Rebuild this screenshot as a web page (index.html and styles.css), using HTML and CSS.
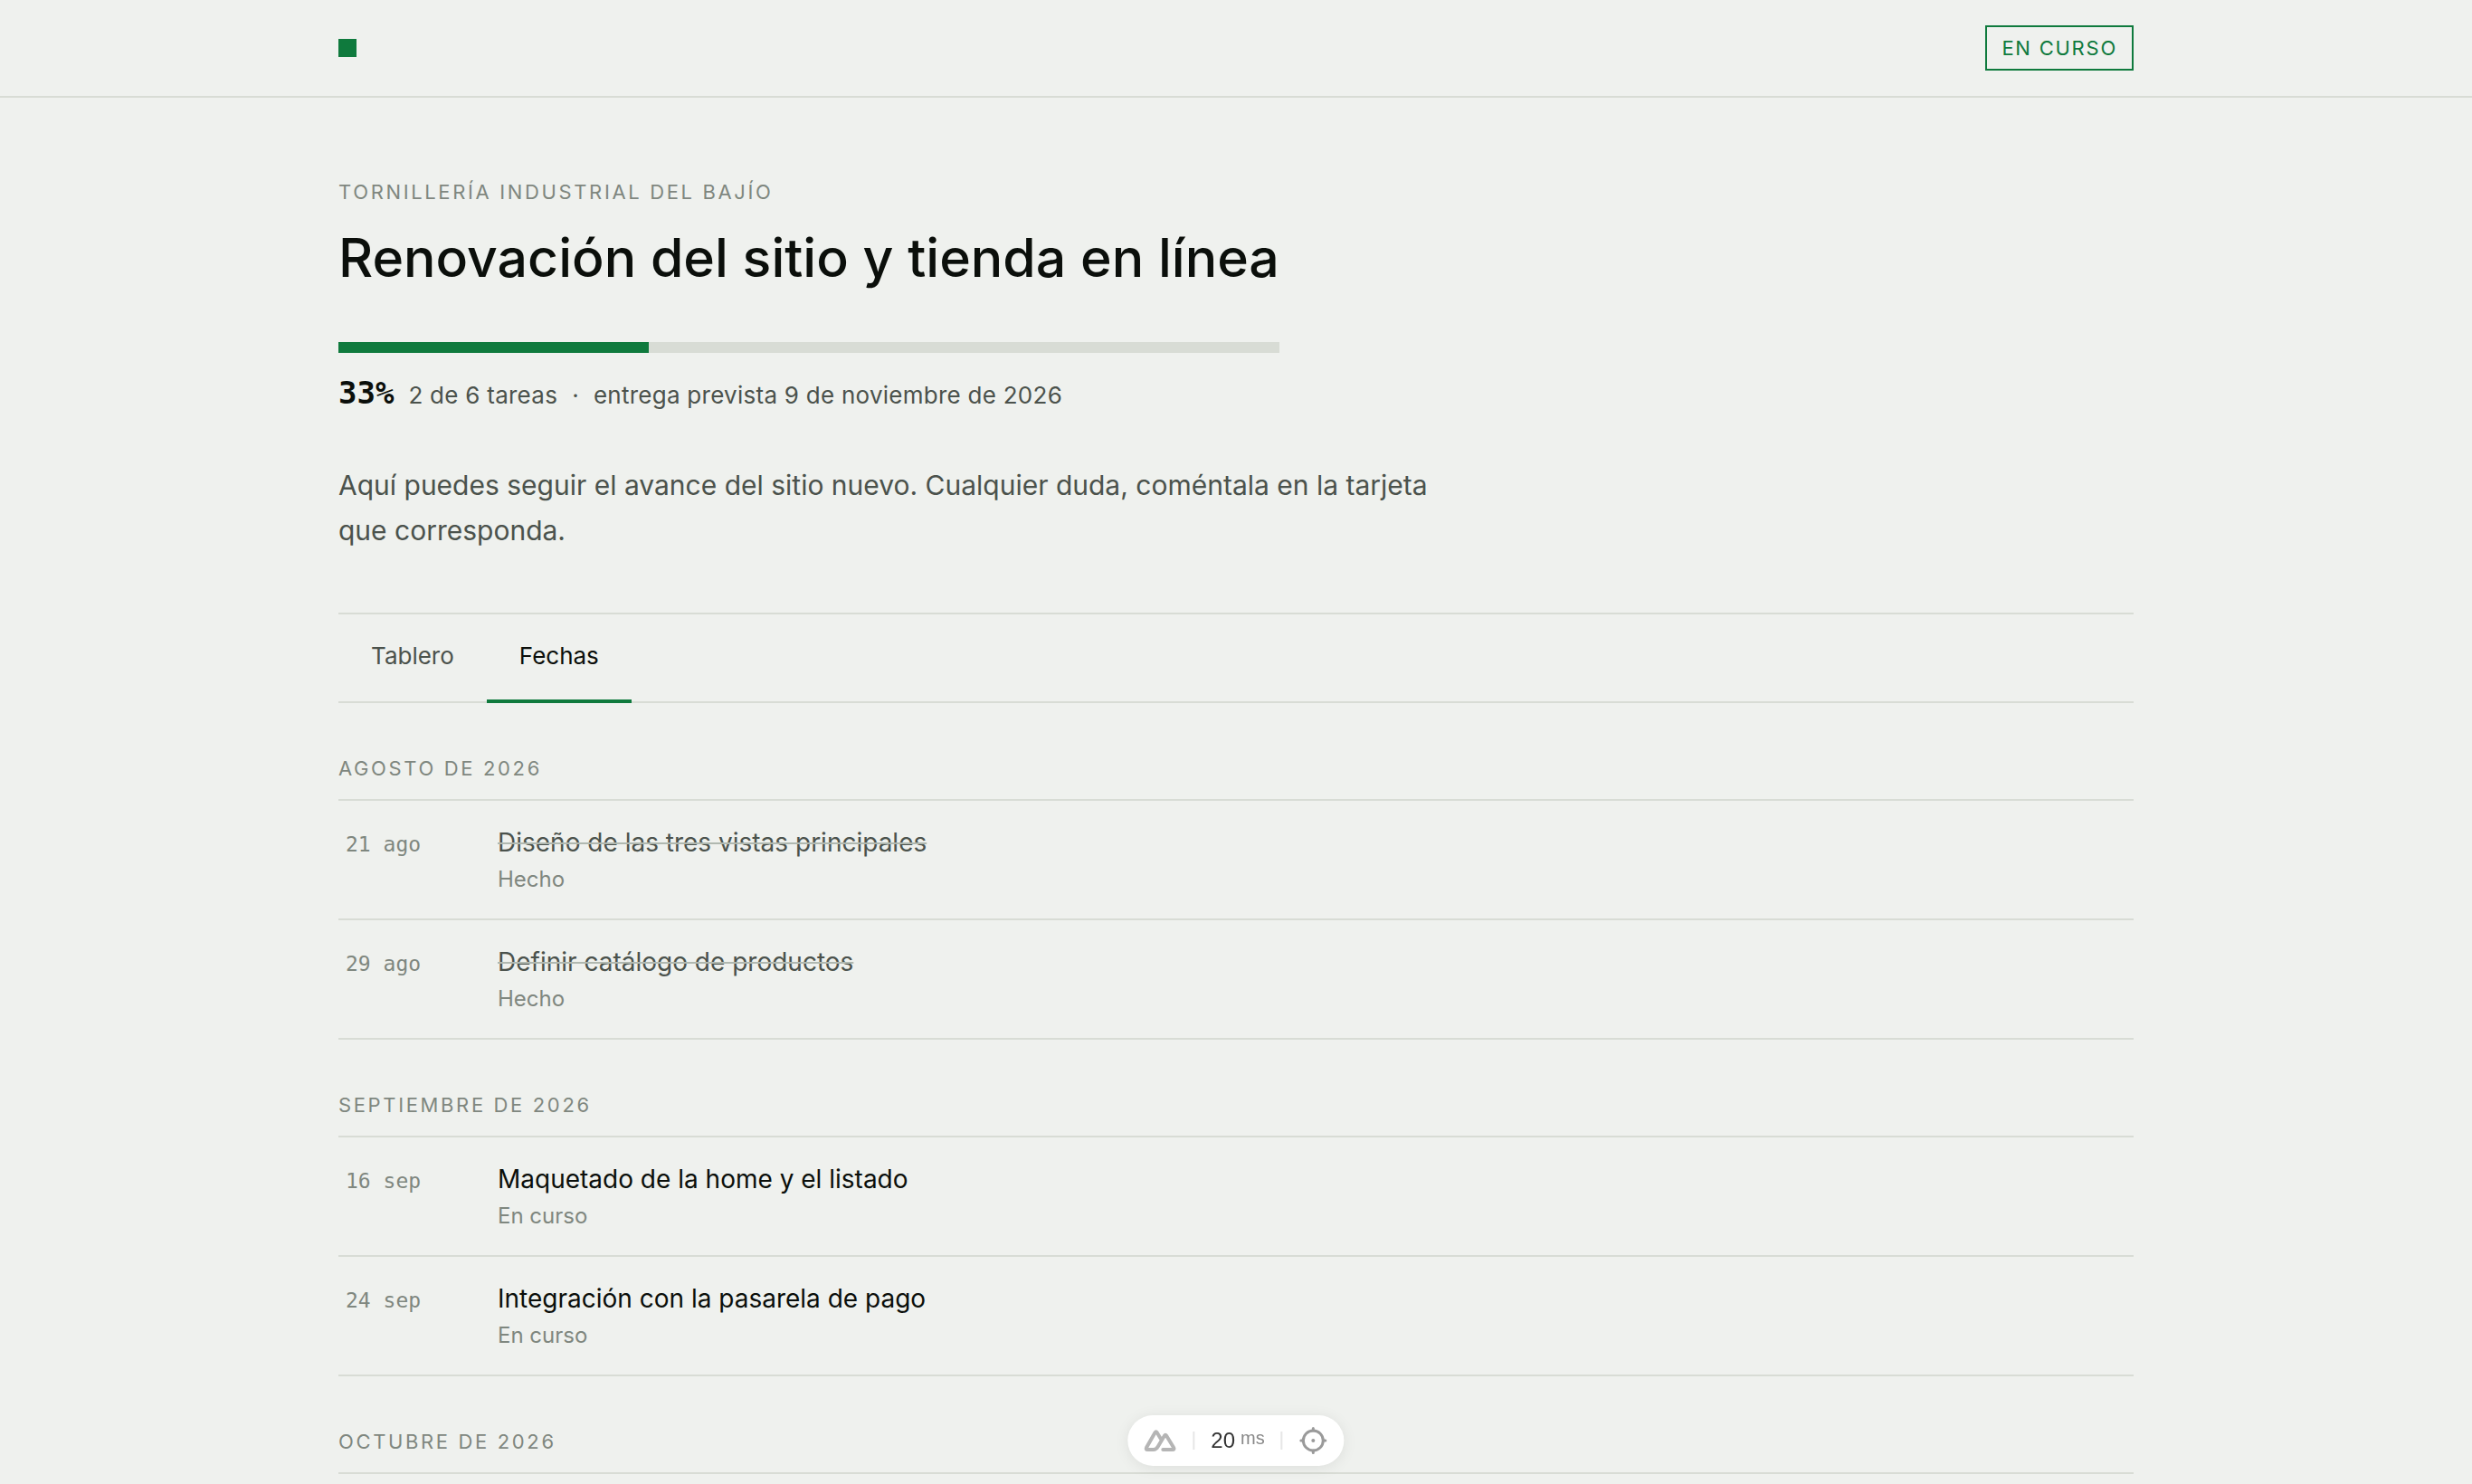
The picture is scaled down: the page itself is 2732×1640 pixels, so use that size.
FILE: index.html
```html
<!DOCTYPE html>
<html lang="es">
<head>
<meta charset="utf-8">
<meta name="viewport" content="width=device-width, initial-scale=1">
<title>Renovación del sitio y tienda en línea</title>
<link rel="stylesheet" href="styles.css">
</head>
<body>
<header class="topbar">
  <div class="container topbar-inner">
    <span class="mark"></span>
    <span class="badge">EN CURSO</span>
  </div>
</header>
<main class="container main">
  <p class="label">TORNILLERÍA INDUSTRIAL DEL BAJÍO</p>
  <h1 class="title">Renovación del sitio y tienda en línea</h1>
  <div class="progress"><div class="progress-fill" style="width: 33%"></div></div>
  <p class="meta"><strong class="percent">33%</strong><span>2 de 6 tareas</span><span class="dot">·</span><span>entrega prevista 9 de noviembre de 2026</span></p>
  <p class="intro">Aquí puedes seguir el avance del sitio nuevo. Cualquier duda, coméntala en la tarjeta que corresponda.</p>
  <nav class="tabs">
    <button class="tab" type="button">Tablero</button>
    <button class="tab tab-active" type="button">Fechas</button>
  </nav>
  <section class="month">
    <h2 class="label month-title">AGOSTO DE 2026</h2>
    <ul class="tasks">
      <li class="task"><time class="date" datetime="2026-08-21">21 ago</time><div class="task-body"><p class="task-name done">Diseño de las tres vistas principales</p><p class="status">Hecho</p></div></li>
      <li class="task"><time class="date" datetime="2026-08-29">29 ago</time><div class="task-body"><p class="task-name done">Definir catálogo de productos</p><p class="status">Hecho</p></div></li>
    </ul>
  </section>
  <section class="month">
    <h2 class="label month-title">SEPTIEMBRE DE 2026</h2>
    <ul class="tasks">
      <li class="task"><time class="date" datetime="2026-09-16">16 sep</time><div class="task-body"><p class="task-name">Maquetado de la home y el listado</p><p class="status">En curso</p></div></li>
      <li class="task"><time class="date" datetime="2026-09-24">24 sep</time><div class="task-body"><p class="task-name">Integración con la pasarela de pago</p><p class="status">En curso</p></div></li>
    </ul>
  </section>
  <section class="month">
    <h2 class="label month-title">OCTUBRE DE 2026</h2>
  </section>
</main>
<aside class="devtools">
  <button class="tool" type="button" aria-label="Nuxt DevTools">
    <svg width="36" height="26" viewBox="0 0 36 26" fill="none" stroke="#b5b5b5" stroke-width="4" stroke-linejoin="round" stroke-linecap="round"><path d="M21 23H31.500q2.500 0 1.300-2.200L24.700 7.500q-1-1.600-2 0L15.500 19.500q-2 3.500-5 3.500H4q-2.500 0-1.300-2.200L12.300 4q1-1.600 2 0L18.500 11"/></svg>
  </button>
  <span class="divider"></span>
  <span class="timing">20 <span class="unit">ms</span></span>
  <span class="divider"></span>
  <button class="tool" type="button" aria-label="Inspector">
    <svg width="32" height="32" viewBox="0 0 32 32" fill="none" stroke="#9a9a9a" stroke-width="3" stroke-linecap="round"><circle cx="16" cy="16" r="11"/><path d="M16 2.500V5M16 27v2.500M2.500 16H5M27 16h2.500"/><circle cx="16" cy="16" r="2" fill="#9a9a9a" stroke="none"/></svg>
  </button>
</aside>
</body>
</html>
```
FILE: styles.css
```css
:root {
  --bg: #eff1ee;
  --ink: #0b0f0b;
  --text: #4b524c;
  --muted: #7f877f;
  --line: #d8dcd5;
  --green: #0f7a3d;
}

* { box-sizing: border-box; }

body {
  margin: 0;
  min-height: 100vh;
  background: var(--bg);
  color: var(--text);
  font-family: Inter, "Liberation Sans", sans-serif;
}

h1, h2, p, ul { margin: 0; padding: 0; }

ul { list-style: none; }

button {
  margin: 0;
  border: 0;
  background: none;
  font: inherit;
  color: inherit;
}

.container {
  width: 100%;
  max-width: 2080px;
  margin: 0 auto;
  padding: 0 48px;
}

.topbar { border-bottom: 2px solid var(--line); }

.topbar-inner {
  display: flex;
  align-items: center;
  justify-content: space-between;
  padding-top: 28px;
  padding-bottom: 28px;
}

.mark {
  width: 20px;
  height: 20px;
  background: var(--green);
}

.badge {
  padding: 7px 16px;
  border: 2px solid var(--green);
  color: var(--green);
  font-size: 22px;
  line-height: 32px;
  letter-spacing: 0.08em;
}

.main { padding-top: 88px; }

.label {
  color: var(--muted);
  font-size: 22px;
  font-weight: 400;
  line-height: 32px;
  letter-spacing: 0.12em;
}

.title {
  margin-top: 24px;
  color: var(--ink);
  font-size: 59px;
  font-weight: 500;
  line-height: 66px;
}

.progress {
  max-width: 1040px;
  height: 12px;
  margin-top: 60px;
  background: var(--line);
}

.progress-fill {
  height: 100%;
  background: var(--green);
}

.meta {
  display: flex;
  align-items: baseline;
  gap: 16px;
  margin-top: 22px;
  font-size: 26px;
  line-height: 44px;
  letter-spacing: 0.01em;
}

.percent {
  color: var(--ink);
  font-family: "DejaVu Sans Mono", monospace;
  font-size: 34px;
  letter-spacing: 0;
}

.intro {
  max-width: 1240px;
  margin-top: 52px;
  font-size: 30px;
  line-height: 50px;
}

.tabs {
  display: flex;
  height: 100px;
  margin-top: 66px;
  border-top: 2px solid var(--line);
  border-bottom: 2px solid var(--line);
}

.tab {
  height: 98px;
  padding: 30px 36px 32px;
  border-bottom: 4px solid transparent;
  font-size: 26px;
  line-height: 32px;
}

.tab-active {
  border-bottom-color: var(--green);
  color: var(--ink);
}

.month { padding-top: 56px; }

.month-title {
  padding-bottom: 18px;
  border-bottom: 2px solid var(--line);
}

.task {
  display: grid;
  grid-template-columns: 144px 1fr;
  gap: 24px;
  align-items: baseline;
  padding: 26px 8px 24px;
  border-bottom: 2px solid var(--line);
}

.date {
  color: var(--muted);
  font-family: "DejaVu Sans Mono", monospace;
  font-size: 23px;
}

.task-name {
  color: var(--ink);
  font-size: 28px;
  line-height: 40px;
}

.done {
  color: var(--text);
  text-decoration: line-through 2px #b0b8b0;
}

.status {
  margin-top: 2px;
  color: var(--muted);
  font-size: 24px;
  line-height: 38px;
}

.devtools {
  position: fixed;
  bottom: 20px;
  left: 50%;
  display: flex;
  align-items: center;
  gap: 18px;
  height: 56px;
  padding: 0 18px;
  border-radius: 28px;
  background: #fff;
  box-shadow: 0 2px 16px rgba(0, 0, 0, 0.08);
  font-family: "Liberation Sans", Arial, sans-serif;
  transform: translateX(-50%);
}

.tool {
  display: flex;
  padding: 0;
}

.divider {
  width: 2px;
  height: 20px;
  background: #e6e6e6;
}

.timing {
  display: flex;
  gap: 6px;
  color: #333;
  font-size: 24px;
  line-height: 28px;
}

.unit {
  color: #888;
  font-size: 20px;
  line-height: 22px;
}
```
